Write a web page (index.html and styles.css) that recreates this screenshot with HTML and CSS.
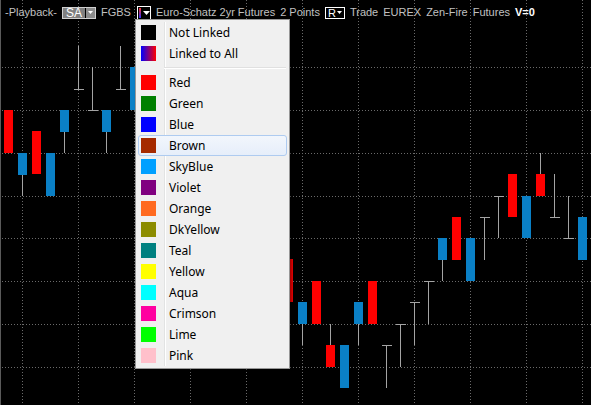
FILE: index.html
```html
<!DOCTYPE html>
<html lang="en">
<head>
    <meta charset="UTF-8">
    <meta name="viewport" content="width=device-width, initial-scale=1.0">
    <title>FGBS Chart</title>
    <link rel="stylesheet" href="styles.css">
</head>
<body>
    <div class="chart">
        <!-- price pane: grid, wicks and bodies -->
        <svg class="plot" width="591" height="405" viewBox="0 0 591 405" shape-rendering="crispEdges">
            <path d="M0.5 0V405" stroke="#5a5a5a"/>
            <g class="grid" stroke="#6a6a6a" stroke-dasharray="1 2">
                <path d="M22.5 0V405M78.5 0V405M134.5 0V405M190.5 0V405M246.5 0V405M302.5 0V405M358.5 0V405M414.5 0V405M470.5 0V405M526.5 0V405M582.5 0V405"/>
                <path d="M2 67.5H591M2 110.5H591M2 153.5H591M2 196.5H591M2 238.5H591M2 281.5H591M2 324.5H591M2 367.5H591"/>
            </g>
            <g class="wicks" stroke="#a4a4a4" fill="none">
                <path d="M22.5 174V196M64.5 131V153M106.5 131V153"/>
                <path d="M78.5 46V89M74 89.5H84M92.5 67V110M88 110.5H98M120.5 46V89M116 89.5H126"/>
                <path d="M302.5 324V345M330.5 324V345M358.5 324V345M442.5 260V281M540.5 153V174"/>
                <path d="M386.5 345V388M382 345.5H392M400.5 324V367M396 324.5H406M414.5 302V345M410 302.5H420M428.5 281V324M424 281.5H434"/>
                <path d="M484.5 217V260M480 217.5H490M498.5 196V238M494 196.5H504M554.5 174V217M550 217.5H560M568.5 196V238M564 238.5H574"/>
            </g>
            <g class="up" fill="#ff0000">
                <rect x="4" y="110" width="9" height="43"/>
                <rect x="32" y="131" width="9" height="43"/>
                <rect x="284" y="259" width="9" height="43"/>
                <rect x="312" y="281" width="9" height="43"/>
                <rect x="326" y="345" width="9" height="22"/>
                <rect x="368" y="281" width="9" height="43"/>
                <rect x="452" y="217" width="9" height="43"/>
                <rect x="508" y="174" width="9" height="43"/>
                <rect x="536" y="174" width="9" height="22"/>
            </g>
            <g class="down" fill="#0a80c6">
                <rect x="18" y="153" width="9" height="22"/>
                <rect x="46" y="153" width="9" height="43"/>
                <rect x="60" y="110" width="9" height="22"/>
                <rect x="102" y="110" width="9" height="22"/>
                <rect x="130" y="67" width="9" height="43"/>
                <rect x="298" y="302" width="9" height="22"/>
                <rect x="340" y="345" width="9" height="43"/>
                <rect x="354" y="302" width="9" height="22"/>
                <rect x="438" y="238" width="9" height="22"/>
                <rect x="466" y="238" width="9" height="43"/>
                <rect x="522" y="196" width="9" height="42"/>
                <rect x="578" y="217" width="9" height="43"/>
            </g>
        </svg>

        <div class="toolbar">
            <span class="label">-Playback-</span>
            <span class="combo">
                <span class="combo-text">SA</span>
                <span class="combo-btn"><svg width="5" height="3" viewBox="0 0 5 3"><path d="M0 0H5L2.5 3Z" fill="#fff"/></svg></span>
            </span>
            <span class="label">FGBS</span>
            <span class="link-btn">
                <span class="link-bar"></span>
                <svg width="7" height="4" viewBox="0 0 7 4"><path d="M0 0H7L3.5 4Z" fill="#fff"/></svg>
            </span>
            <span class="label">Euro-Schatz 2yr Futures</span>
            <span class="label">2 Points</span>
            <span class="range-btn">R<svg width="5" height="3" viewBox="0 0 5 3"><path d="M0 0H5L2.5 3Z" fill="#fff"/></svg></span>
            <span class="label">Trade</span>
            <span class="label">EUREX</span>
            <span class="label">Zen-Fire</span>
            <span class="label">Futures</span>
            <span class="label volume">V=0</span>
        </div>

        <ul class="link-menu">
            <li class="item"><span class="swatch" style="background: #000000;"></span>Not Linked</li>
            <li class="item"><span class="swatch swatch-all"></span>Linked to All</li>
            <li class="sep"></li>
            <li class="item"><span class="swatch" style="background: #ff0000;"></span>Red</li>
            <li class="item"><span class="swatch" style="background: #008000;"></span>Green</li>
            <li class="item"><span class="swatch" style="background: #0000ff;"></span>Blue</li>
            <li class="item active"><span class="swatch" style="background: #a52a00;"></span>Brown</li>
            <li class="item"><span class="swatch" style="background: #00a0ff;"></span>SkyBlue</li>
            <li class="item"><span class="swatch" style="background: #800080;"></span>Violet</li>
            <li class="item"><span class="swatch" style="background: #ff6a20;"></span>Orange</li>
            <li class="item"><span class="swatch" style="background: #8c8c00;"></span>DkYellow</li>
            <li class="item"><span class="swatch" style="background: #008080;"></span>Teal</li>
            <li class="item"><span class="swatch" style="background: #ffff00;"></span>Yellow</li>
            <li class="item"><span class="swatch" style="background: #00ffff;"></span>Aqua</li>
            <li class="item"><span class="swatch" style="background: #ff00a0;"></span>Crimson</li>
            <li class="item"><span class="swatch" style="background: #00ff00;"></span>Lime</li>
            <li class="item"><span class="swatch" style="background: #ffc0cb;"></span>Pink</li>
        </ul>
    </div>
</body>
</html>
```

FILE: styles.css
```css
body {
    margin: 0;
    background: #000;
    font-family: "Liberation Sans", Arial, sans-serif;
}
.chart {
    position: relative;
    width: 591px;
    height: 405px;
    overflow: hidden;
    background: #000;
}
.plot {
    display: block;
}

/* instrument bar across the top of the pane */
.toolbar {
    position: absolute;
    top: 4px;
    left: 5px;
    display: flex;
    align-items: center;
    gap: 5px;
    height: 17px;
    font-size: 11px;
    color: #c0c0c0;
    white-space: nowrap;
}
.label {
    line-height: 17px;
}
.volume {
    color: #fff;
    font-weight: bold;
}
.combo {
    display: flex;
    height: 12px;
    border: 1px solid #d0d0d0;
    box-sizing: border-box;
    background: #808080;
}
.combo-text {
    padding: 0 3px;
    color: #fff;
    font-size: 12px;
    line-height: 10px;
}
.combo-btn {
    display: flex;
    align-items: center;
    justify-content: center;
    width: 9px;
    border-left: 1px solid #000;
    background: #8c8c8c;
}
.link-btn {
    display: flex;
    align-items: center;
    gap: 2px;
    width: 14px;
    height: 14px;
    margin-left: 1px;
    border: 1px solid #fff;
    box-sizing: border-box;
}
.link-bar {
    width: 2px;
    height: 10px;
    margin-left: 1px;
    background: linear-gradient(#ff3030, #3030ff);
}
.range-btn {
    display: flex;
    align-items: center;
    gap: 1px;
    width: 20px;
    height: 12px;
    padding-left: 2px;
    border: 1px solid #fff;
    box-sizing: border-box;
    color: #fff;
    font-size: 11px;
    line-height: 10px;
}

/* link colour dropdown */
.link-menu {
    position: absolute;
    left: 135px;
    top: 19px;
    width: 155px;
    margin: 0;
    padding: 2px;
    list-style: none;
    background: #f0f0f0;
    border: 1px solid #979797;
    box-sizing: border-box;
    box-shadow: 2px 2px 3px rgba(0,0,0,0.4);
    font-family: "Noto Sans", "Segoe UI", sans-serif;
    font-size: 12px;
    color: #000;
}
.link-menu::before {
    content: "";
    position: absolute;
    top: 2px;
    bottom: 2px;
    left: 28px;
    width: 1px;
    background: #e2e3e3;
    border-right: 1px solid #fff;
}
.item {
    position: relative;
    display: flex;
    align-items: center;
    height: 21px;
    box-sizing: border-box;
    border: 1px solid transparent;
    border-radius: 3px;
}
.item.active {
    background: linear-gradient(#f2f6fc, #e6eefa);
    border-color: #aecbf0;
}
.swatch {
    width: 15px;
    height: 15px;
    margin: 0 13px 0 2px;
}
.swatch-all {
    background: linear-gradient(to right, #0000ff, #ff0000);
}
.sep {
    position: relative;
    height: 8px;
}
.sep::after {
    content: "";
    position: absolute;
    top: 3px;
    left: 26px;
    right: 1px;
    height: 1px;
    background: #e0e0e0;
    border-bottom: 1px solid #fff;
}
```
